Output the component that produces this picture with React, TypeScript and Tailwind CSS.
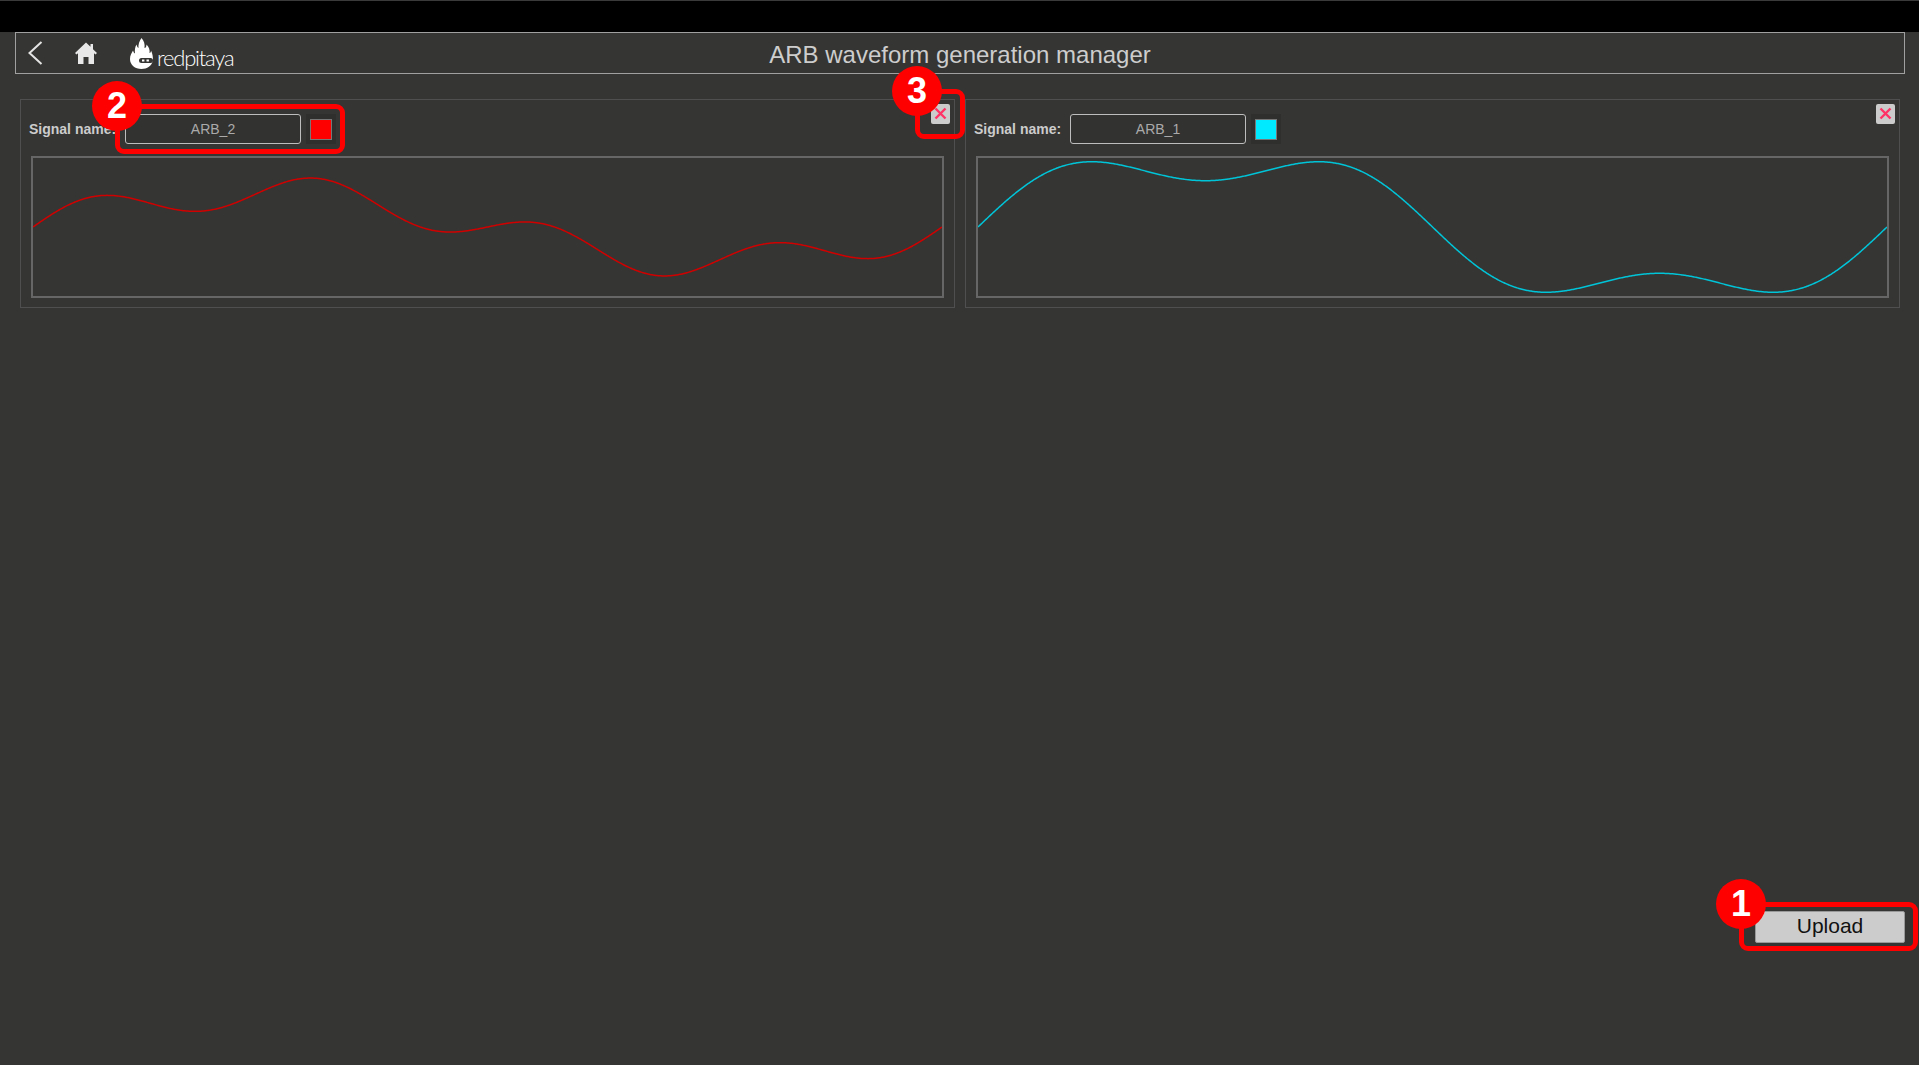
import React from "react";

const W = 909;
const H = 138;
function wave(a: number, b: number, k: number) {
  const pts: string[] = [];
  for (let x = 0; x <= W; x += 1) {
    const t = x / W;
    const y = H / 2 - a * Math.sin(2 * Math.PI * t) - b * Math.sin(2 * Math.PI * k * t);
    pts.push(`${x},${y.toFixed(2)}`);
  }
  return pts.join(" ");
}

function Close() {
  return (
    <button className="absolute right-[4px] top-[4px] flex h-[20px] w-[19px] items-center justify-center rounded-[2px] bg-[#cccccc]">
      <svg className="-mt-[1px]" width="13" height="13" viewBox="0 0 13 13" fill="none">
        <path d="M1.5 1.5L11.5 11.5M11.5 1.5L1.5 11.5" stroke="#ff3366" strokeWidth="2.4" />
      </svg>
    </button>
  );
}

function Card(props: { name: string; color: string; stroke: string; a: number; b: number; k: number }) {
  return (
    <div className="relative h-[209px] w-[935px] border border-[#4f4f4f] px-[10px] pt-[14px]">
      <Close />
      <div className="-ml-[2px] flex h-[30px] items-center">
        <span className="w-[96px] text-[14px] font-bold text-[#cccccc]">Signal name:</span>
        <div className="flex h-[30px] w-[176px] items-center justify-center rounded-[3px] border border-[#bdbdbd] bg-[#323230] text-[14px] text-[#aaaaaa]">
          {props.name}
        </div>
        <div className="ml-[5px] flex h-[30px] w-[30px] items-center justify-center bg-[#2f2f2d]">
          <div className="h-[21px] w-[22px] border border-[#777777]" style={{ backgroundColor: props.color }} />
        </div>
      </div>
      <div className="mt-[12px] h-[142px] w-[913px] border-2 border-[#666666]">
        <svg width={W} height={H} className="block" viewBox={`0 0 ${W} ${H}`}>
          <polyline points={wave(props.a, props.b, props.k)} fill="none" stroke={props.stroke} strokeWidth="1.5" />
        </svg>
      </div>
    </div>
  );
}

function Badge(props: { n: string; cx: number; cy: number }) {
  return (
    <div
      className="absolute z-20 flex h-[50px] w-[50px] items-center justify-center rounded-full bg-[#ff0000] text-[36px] font-bold text-white"
      style={{ left: props.cx - 25, top: props.cy - 25 }}
    >
      {props.n}
    </div>
  );
}

function Mark(props: { x: number; y: number; w: number; h: number }) {
  return (
    <div
      className="absolute z-10 rounded-[9px] border-[5px] border-[#ff0000]"
      style={{ left: props.x, top: props.y, width: props.w, height: props.h }}
    />
  );
}

export default function App() {
  return (
    <div className="relative flex h-[1065px] flex-col overflow-hidden bg-[#353533] font-['Liberation_Sans',Arial,sans-serif]">
      <div className="h-[32px] shrink-0 border-t border-[#3a3a3a] bg-black" />
      <header className="relative mx-[15px] flex h-[42px] w-[1890px] shrink-0 items-center border border-[#a0a0a0]">
        <svg className="ml-[11px]" width="18" height="26" viewBox="0 0 18 26" fill="none">
          <path d="M14.5 2L2.5 13L14.5 24" stroke="#e4e4e4" strokeWidth="2" />
        </svg>
        <svg className="ml-[29px]" width="24" height="24" viewBox="0 0 24 24">
          <path d="M12 1.5L1 12L2.5 13.5L4 12.2V23H9.5V16H14.5V23H20V12.2L21.5 13.5L23 12L19 8.2V3H16.5V5.8Z" fill="#e8e8e8" />
        </svg>
        <div className="ml-[32px] flex items-end">
          <svg width="23" height="31" viewBox="0 0 23 31">
            <path
              d="M11.5 0C14 3 15 5.5 14.5 10C15.5 10 16.5 9 16.5 6.5C19 9 20 12 19.5 15C20.5 15 21 14 21 12.5C22.5 15.5 23 19 23 22C22 28 17 31 11.5 31C5 31 0 27 0 21C0 17.5 1.5 15 3 12.5C3.5 14 4 15 5 15.5C4.5 12 5 9 6.5 6.5C7 8.5 7.5 9.5 8.5 10C8 6.5 9.5 3 11.5 0Z"
              fill="#ffffff"
            />
            <rect x="9" y="20" width="14" height="5" rx="2.5" fill="#353533" />
            <rect x="12" y="21.5" width="2.4" height="2" fill="#ffffff" />
            <rect x="16.5" y="21.5" width="2.4" height="2" fill="#ffffff" />
          </svg>
          <span className="ml-[4px] -mb-[3px] font-['Lato',sans-serif] text-[22px] leading-[28px] font-light tracking-[-1.2px] text-white">
            redpitaya
          </span>
        </div>
        <h1 className="absolute left-0 right-0 top-[4px] text-center text-[24px] font-normal text-[#cdcdcd]">
          ARB waveform generation manager
        </h1>
      </header>

      <div className="mt-[25px] flex gap-[10px] pl-[20px]">
        <Card name="ARB_2" color="#ff0000" stroke="#d00000" a={35} b={16.3} k={4} />
        <Card name="ARB_1" color="#00eaff" stroke="#00c4d8" a={69.3} b={23} k={3} />
      </div>

      <div className="mt-[603px] flex justify-end pr-[14px]">
        <button className="flex h-[32px] w-[150px] items-center justify-center rounded-[2px] border border-[#999999] bg-[#cccccc] pb-[3px] text-[21px] leading-[24px] text-[#111111]">
          Upload
        </button>
      </div>

      <Mark x={115} y={104} w={230} h={50} />
      <Mark x={915} y={89} w={50} h={50} />
      <Mark x={1739} y={902} w={179} h={49} />
      <Badge n="2" cx={117} cy={106} />
      <Badge n="3" cx={917} cy={91} />
      <Badge n="1" cx={1741} cy={904} />
    </div>
  );
}
